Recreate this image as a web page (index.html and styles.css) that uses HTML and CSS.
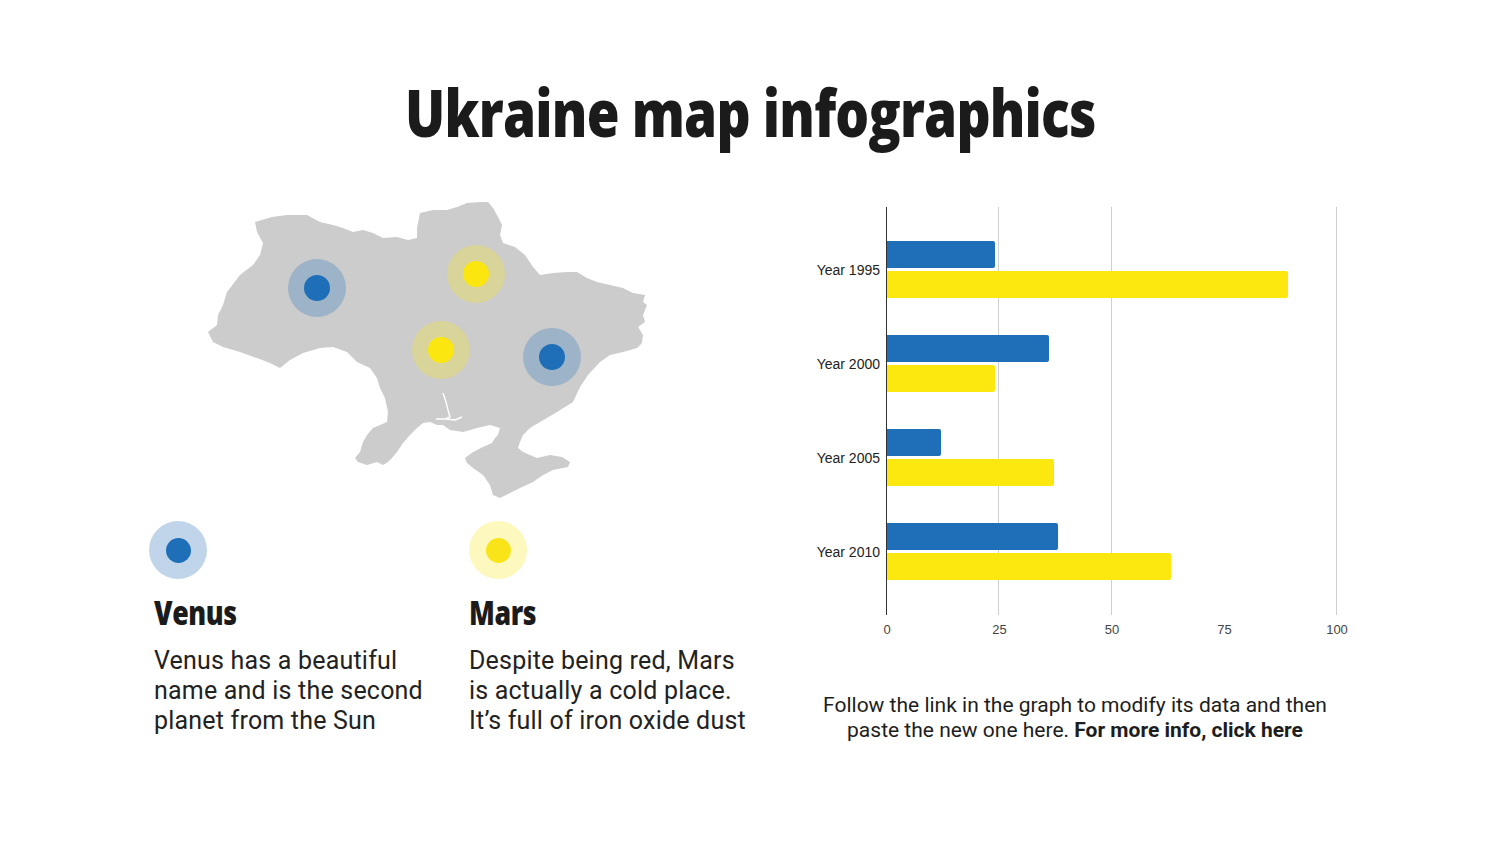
FILE: index.html
```html
<!DOCTYPE html>
<html lang="en">
<head>
<meta charset="utf-8">
<title>Ukraine map infographics</title>
<link rel="stylesheet" href="styles.css">
</head>
<body>
<div class="slide">
  <h1 class="title"><span>Ukraine map infographics</span></h1>
  <div class="content">
    <section class="left">
      <svg class="map" width="460" height="310" viewBox="195 195 460 310" aria-label="Map of Ukraine">
        <path class="land" d="M255,222 L272,217 287,215 307,215 320,222 333,225 343,228 353,232 363,230 373,233 383,238 397,237 408,240 417,238 417,228 420,213 433,210 447,210 457,207 467,203 480,202 488,202 493,208 498,217 502,225 500,235 503,243 515,247 525,255 533,267 540,275 553,273 567,272 577,272 587,278 597,282 610,285 623,288 633,293 645,295 643,302 647,305 643,315 645,322 638,327 643,335 642,343 637,348 623,352 610,355 600,362 588,375 580,387 573,402 557,412 540,422 530,428 523,435 520,442 518,448 523,452 537,458 550,455 562,457 570,462 568,467 553,470 543,475 533,482 520,488 510,493 500,498 493,495 490,485 483,475 473,468 467,463 465,458 473,452 483,447 492,443 495,438 498,435 500,428 490,425 477,428 463,432 450,430 443,425 437,425 430,422 423,423 417,428 410,435 403,443 397,452 392,458 388,462 383,465 377,462 367,465 358,462 355,458 360,452 363,442 367,435 373,428 380,425 387,422 388,412 385,398 380,388 377,378 370,368 357,362 347,352 333,347 320,348 303,353 290,360 280,368 270,363 257,358 240,352 223,347 213,342 208,332 217,325 218,315 223,305 227,292 240,275 253,265 260,255 263,243 257,232 Z"/>
        <polyline class="river" points="443,393 446,402 448,410 450,417 445,419"/>
        <polyline class="river" points="436,419 446,419 455,420 462,417"/>
        <polyline class="river" points="528,433 532,428 536,425"/>
        <circle class="halo-blue" cx="317" cy="288" r="29"/>
        <circle class="dot-blue" cx="317" cy="288" r="13"/>
        <circle class="halo-yellow" cx="476" cy="274" r="29"/>
        <circle class="dot-yellow" cx="476" cy="274" r="13"/>
        <circle class="halo-yellow" cx="441" cy="350" r="29"/>
        <circle class="dot-yellow" cx="441" cy="350" r="13"/>
        <circle class="halo-blue" cx="552" cy="357" r="29"/>
        <circle class="dot-blue" cx="552" cy="357" r="13"/>
      </svg>
      <div class="legend">
        <div class="item item-venus">
          <div class="marker marker-blue"><span></span></div>
          <h2>Venus</h2>
          <p>Venus has a beautiful name and is the second planet from the Sun</p>
        </div>
        <div class="item item-mars">
          <div class="marker marker-yellow"><span></span></div>
          <h2>Mars</h2>
          <p>Despite being red, Mars is actually a cold place. It’s full of iron oxide dust</p>
        </div>
      </div>
    </section>
    <section class="right">
      <div class="chart">
        <div class="labels">
          <div class="label">Year 1995</div>
          <div class="label">Year 2000</div>
          <div class="label">Year 2005</div>
          <div class="label">Year 2010</div>
        </div>
        <div class="plot">
          <div class="group"><div class="bar blue" style="width:108px"></div><div class="bar yellow" style="width:401px"></div></div>
          <div class="group"><div class="bar blue" style="width:162px"></div><div class="bar yellow" style="width:108px"></div></div>
          <div class="group"><div class="bar blue" style="width:54px"></div><div class="bar yellow" style="width:167px"></div></div>
          <div class="group"><div class="bar blue" style="width:171px"></div><div class="bar yellow" style="width:284px"></div></div>
        </div>
      </div>
      <div class="ticks">
        <span class="tick"><span>0</span></span>
        <span class="tick"><span>25</span></span>
        <span class="tick"><span>50</span></span>
        <span class="tick"><span>75</span></span>
        <span class="tick"><span>100</span></span>
      </div>
      <p class="caption">Follow the link in the graph to modify its data and then paste the new one here. <b>For more info, click here</b></p>
    </section>
  </div>
</div>
</body>
</html>
```
FILE: styles.css
```css
* { box-sizing: border-box; }
html, body { margin: 0; padding: 0; background: #fff; }
body { width: 1500px; height: 844px; overflow: hidden; color: #1d1d1d; font-family: Roboto, "Liberation Sans", sans-serif; }

.slide { width: 1500px; height: 844px; padding-top: 78px; }

.title {
  margin: 0;
  text-align: center;
  font-family: "Open Sans", "Liberation Sans", sans-serif;
  font-weight: 800;
  font-size: 66px;
  line-height: 66px;
  letter-spacing: -1px;
  color: #1b1b1b;
}
.title span { display: inline-block; transform: scaleX(0.806); transform-origin: center; white-space: nowrap; }

.content { display: flex; margin-top: 51px; }

.left { width: 810px; padding-left: 149px; flex: none; }
.map { display: block; margin-left: 46px; }
.land { fill: #cccccc; }
.river { fill: none; stroke: #fff; stroke-width: 1.4; stroke-linejoin: round; }
.halo-blue { fill: rgba(31, 111, 184, 0.27); }
.dot-blue { fill: #1f6fb8; }
.halo-yellow { fill: rgba(252, 232, 15, 0.27); }
.dot-yellow { fill: #fbe60f; }

.legend { display: flex; margin-top: 16px; }
.item { width: 320px; flex: none; }
.marker { width: 58px; height: 58px; border-radius: 50%; display: flex; align-items: center; justify-content: center; }
.marker span { width: 25px; height: 25px; border-radius: 50%; }
.marker-blue { background: #c1d5ea; }
.marker-blue span { background: #1f6fb8; }
.marker-yellow { background: #fdf8bd; }
.marker-yellow span { background: #f9e41a; }

.item h2 {
  margin: 17px 0 0 0;
  font-family: "Open Sans", "Liberation Sans", sans-serif;
  font-weight: 800;
  font-size: 33px;
  line-height: 33px;
  letter-spacing: -0.5px;
  color: #1b1b1b;
  transform: scaleX(0.81);
  transform-origin: left center;
  white-space: nowrap;
}
.item p {
  margin: 17px 0 0 0;
  font-size: 25px;
  line-height: 30px;
  letter-spacing: 0.2px;
  width: 282px;
  color: #222;
}
.item-venus h2, .item-venus p { margin-left: 5px; }

.right { width: 530px; padding-top: 12px; flex: none; }
.chart { display: flex; height: 408px; }
.labels {
  width: 76px; flex: none;
  display: flex; flex-direction: column; gap: 37px;
  padding: 34px 6px 35px 0;
}
.label {
  height: 57px; display: flex; align-items: center; justify-content: flex-end;
  font-family: "Liberation Sans", Arial, sans-serif; font-size: 14px; color: #222; white-space: nowrap;
}
.plot {
  width: 452px; flex: none;
  border-left: 1px solid #333;
  display: flex; flex-direction: column; gap: 37px;
  padding: 34px 0 35px 0;
  background-image: repeating-linear-gradient(to right, transparent 0, transparent 111.5px, #cfcfcf 111.5px, #cfcfcf 112.5px);
}
.group { display: flex; flex-direction: column; gap: 3px; }
.bar { height: 27px; border-radius: 0 2px 2px 0; }
.bar.blue { background: #1f6fb8; }
.bar.yellow { background: #fce80f; }

.ticks { display: flex; justify-content: space-between; width: 450px; margin-left: 77px; margin-top: 7px; }
.tick { width: 0; display: flex; justify-content: center; }
.tick span { font-family: "Liberation Sans", Arial, sans-serif; font-size: 13px; line-height: 16px; color: #444; }

.caption {
  margin: 55px 5px 0 5px;
  text-align: center;
  font-size: 21px;
  line-height: 25px;
  color: #1d1d1d;
}
.caption b { font-weight: 700; }
```
